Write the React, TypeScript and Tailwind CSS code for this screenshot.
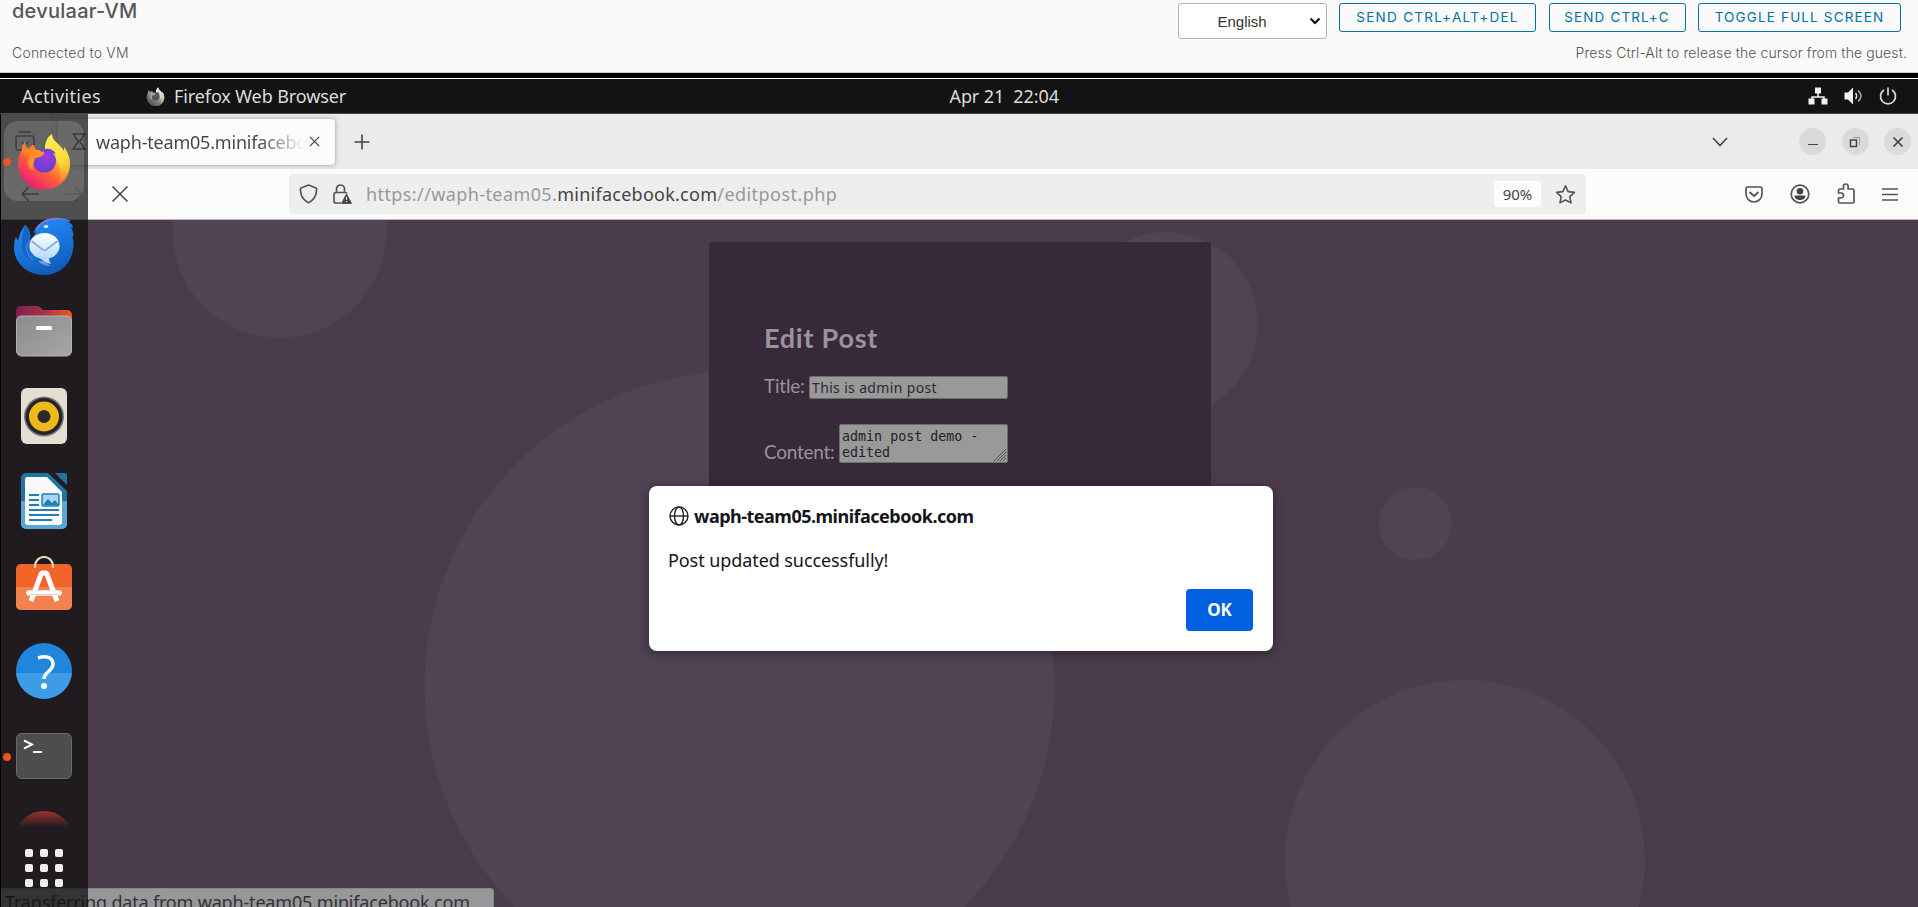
import React from 'react';

function FirefoxLogo({ className, id }: { className: string; id: string }) {
  return (
    <svg viewBox="0 0 54 56" className={className}>
      <defs>
        <linearGradient id={id + 'a'} x1="0.85" y1="0.1" x2="0.25" y2="0.95">
          <stop offset="0" stopColor="#fff04a" />
          <stop offset="0.35" stopColor="#ffb52e" />
          <stop offset="0.65" stopColor="#ff5a3c" />
          <stop offset="1" stopColor="#ee1c78" />
        </linearGradient>
        <linearGradient id={id + 'b'} x1="0" y1="0" x2="1" y2="1">
          <stop offset="0" stopColor="#ff7a1e" />
          <stop offset="1" stopColor="#ffa02e" />
        </linearGradient>
        <radialGradient id={id + 'c'} cx="0.6" cy="0.3" r="0.8">
          <stop offset="0" stopColor="#a13bd8" />
          <stop offset="1" stopColor="#5b3fd0" />
        </radialGradient>
        <linearGradient id={id + 'd'} x1="0.3" y1="0" x2="0.6" y2="1">
          <stop offset="0" stopColor="#fff14f" />
          <stop offset="0.6" stopColor="#ffd83a" />
          <stop offset="1" stopColor="#ffa330" stopOpacity="0" />
        </linearGradient>
      </defs>
      <path
        d="M8 9c0 3 1 5 3 7 2-2 3-3 6-4 0 2 1 3 2 5l9 0c0-5 1-11 7-15 0 6 5 8 9 13 1 1 2 2 3 4l0-4c3 4 6 10 6 16 0 15-12 26-26 26S1 45 1 31c0-7 2-11 4-14 0-3 1-6 3-8z"
        fill={'url(#' + id + 'a)'}
      />
      <path
        d="M28 17c0-6 1-12 7-16 0 6 5 8 9 13 1 1 2 2 3 4l0-4c3 4 6 10 6 16 0 10-6 18-13 22 4-6 5-13 2-20-2-7-8-11-14-15z"
        fill={'url(#' + id + 'd)'}
      />
      <circle cx="27.500" cy="28" r="11.500" fill={'url(#' + id + 'c)'} />
      <path d="M28 16c5-1 9 1 11 5-2-1-3-1-4 0l-7-2z" fill="#7d3fe0" />
      <path
        d="M8 9c0 3 1 5 3 7 2-2 3-3 6-4 0 3 2 6 5 6l5 1c1 4-5 5-8 6-2 1-2 3-2 5-2 2-2 5 0 8-6-3-8-9-5-15-3-1-5-3-7-7 0-3 1-5 3-7z"
        fill={'url(#' + id + 'b)'}
      />
    </svg>
  );
}

function Thunderbird() {
  return (
    <svg viewBox="0 0 62 60" className="mt-[2px] h-[60px] w-[62px]">
      <defs>
        <linearGradient id="tb" x1="0.2" y1="0" x2="0.6" y2="1">
          <stop offset="0" stopColor="#2a8af0" />
          <stop offset="0.5" stopColor="#1977e0" />
          <stop offset="1" stopColor="#0f5bb5" />
        </linearGradient>
        <linearGradient id="tbm" x1="0" y1="0" x2="0" y2="1">
          <stop offset="0" stopColor="#ffffff" />
          <stop offset="1" stopColor="#b5dbfb" />
        </linearGradient>
      </defs>
      <path
        d="M12 8c5 4 6 9 5 15l5-6c1-10 11-16 22-16 6 0 11 1 14 3l-3 1c3 1 5 3 5 6l-2-1c2 4 3 8 2 10l-1-1c2 5 2 9 1 13-2 16-14 26-29 26C14 58 1 46 1 30c0-5 1-8 2-10l2 4c1-7 4-12 7-16z"
        fill="url(#tb)"
      />
      <path d="M12 8c5 4 6 9 5 15-3 6-2 14 1 20-8-4-11-10-9-18 0-6 1-12 3-17z" fill="#1566c4" />
      <path d="M16 24c-4 6-3 14 4 19" fill="none" stroke="#6f7be0" strokeWidth="1" />
      <path d="M20 18c2-10 11-17 23-17 5 0 10 1 14 3-9-2-17-2-24 1-5 1-10 7-13 13z" fill="#8a7bdc" />
      <path d="M25 44c4 4 8 5 13 5-3-1-4-3-5-5z" fill="#7b8df0" />
      <ellipse cx="31.500" cy="29" rx="15" ry="13" fill="url(#tbm)" />
      <path d="M24 39c5 4 9 7 14 8-2-3-2-5-2-8z" fill="#b5dbfb" />
      <path d="M18.500 24l11 8.500c1.500 1 2.500 1 4 0l11-8.500" fill="none" stroke="#86aed6" strokeWidth="1.800" />
      <ellipse cx="33" cy="9.500" rx="2.200" ry="1.500" fill="#e8f4ff" />
    </svg>
  );
}

function Files() {
  return (
    <svg viewBox="0 0 56 52" className="h-[52px] w-[56px]">
      <defs>
        <linearGradient id="fo" x1="0" y1="0" x2="1" y2="0">
          <stop offset="0" stopColor="#7b2150" />
          <stop offset="0.5" stopColor="#a8324a" />
          <stop offset="1" stopColor="#ea5a24" />
        </linearGradient>
        <linearGradient id="fg" x1="0" y1="0" x2="1" y2="1">
          <stop offset="0" stopColor="#8c8c8c" />
          <stop offset="1" stopColor="#a6a6a6" />
        </linearGradient>
      </defs>
      <path d="M0 22V6a5 5 0 0 1 5-5h16c2 0 3 1 4 2l2 2h24a5 5 0 0 1 5 5v14z" fill="url(#fo)" />
      <rect x="0.500" y="11" width="55" height="40" rx="5" fill="url(#fg)" stroke="#b3b3b3" />
      <rect x="20" y="21" width="16" height="4" rx="1.500" fill="#fff" />
    </svg>
  );
}

function Rhythmbox() {
  return (
    <svg viewBox="0 0 46 56" className="h-[56px] w-[46px]">
      <rect width="46" height="56" rx="6" fill="#e4dfd2" />
      <circle cx="23" cy="28.500" r="20" fill="#77767a" />
      <circle cx="23" cy="28.500" r="18.500" fill="#24232b" />
      <circle cx="23" cy="28.500" r="15" fill="#f0b91a" />
      <circle cx="23" cy="28.500" r="6.500" fill="#2b2b2b" />
    </svg>
  );
}

function Writer() {
  return (
    <svg viewBox="0 0 46 56" className="h-[56px] w-[46px]">
      <path d="M5 0h22l19 18v33a5 5 0 0 1-5 5H5a5 5 0 0 1-5-5V5a5 5 0 0 1 5-5z" fill="#1d75a4" />
      <path d="M0 28h46v23a5 5 0 0 1-5 5H5a5 5 0 0 1-5-5z" fill="#57a9d2" />
      <path d="M6 4h20l15 15v30a3 3 0 0 1-3 3H7a3 3 0 0 1-3-3V6a2 2 0 0 1 2-2z" fill="#fafafa" />
      <path d="M34 0h10a2 2 0 0 1 2 2v10z" fill="#1d75a4" />
      <path d="M8 22h10M8 27h10M8 32h10M8 37h30M8 42h30M8 47h23" stroke="#1d7fb3" strokeWidth="2.200" />
      <rect x="21" y="21" width="17" height="12" rx="1.500" fill="#a9d6ee" stroke="#1d7fb3" strokeWidth="1.500" />
      <path d="M22 32l5-6 4 4 3-3 4 5z" fill="#1d7fb3" />
    </svg>
  );
}

function Software() {
  return (
    <svg viewBox="0 0 56 54" className="-mt-[6px] h-[54px] w-[56px]">
      <rect y="8" width="56" height="46" rx="5" fill="#f2632a" />
      <path d="M0 31h56v18a5 5 0 0 1-5 5H5a5 5 0 0 1-5-5z" fill="#f3804f" />
      <path d="M19 12v-2a9 9 0 0 1 18 0v2" fill="none" stroke="#ead9b0" strokeWidth="2.200" />
      <path d="M15 45l10.500-28h5L41 45" fill="none" stroke="#fff" strokeWidth="5" strokeLinejoin="bevel" />
      <path d="M13 37h30" stroke="#fff" strokeWidth="5.500" strokeLinecap="round" />
      <path d="M13 38.500h30" stroke="#f4c3b0" strokeWidth="0.800" />
    </svg>
  );
}

function Help() {
  return (
    <svg viewBox="0 0 56 56" className="h-[56px] w-[56px]">
      <circle cx="28" cy="28" r="28" fill="#2086dd" />
      <path d="M0.100 30h55.800a28 28 0 0 1-55.800 0z" fill="#3d9ce6" />
      <path d="M22 15c9-3 15 0 15 6 0 7-9 8-9 15" fill="none" stroke="#fff" strokeWidth="3.600" />
      <circle cx="28" cy="43" r="3" fill="#fff" />
    </svg>
  );
}

function Terminal() {
  return (
    <svg viewBox="0 0 56 46" className="h-[46px] w-[56px]">
      <rect x="0.500" y="0.500" width="55" height="45" rx="5" fill="#4d4d4d" stroke="#6a6a6a" />
      <path d="M8 7.500l8 4-8 4" fill="none" stroke="#fff" strokeWidth="2" />
      <path d="M17 19h9" stroke="#fff" strokeWidth="2" />
    </svg>
  );
}

function DockRow({ children, running }: { children: React.ReactNode; running?: boolean }) {
  return (
    <div className="relative flex h-[85px] w-full shrink-0 items-center justify-center pr-[2px]">
      {running && <span className="absolute left-[2px] top-[39px] h-2 w-2 rounded-full bg-[#e95420]" />}
      {children}
    </div>
  );
}

function Dock() {
  const dots = [0, 1, 2, 3, 4, 5, 6, 7, 8];
  return (
    <div className="absolute bottom-0 left-0 top-[35px] flex w-[88px] flex-col items-center border-l border-black bg-[#0f0f0f]/73 pt-[4.500px]">
      <DockRow running>
        <div className="flex h-[80px] w-[80px] shrink-0 items-center justify-center rounded-[14px] bg-white/15">
          <FirefoxLogo id="fx" className="h-[56px] w-[54px]" />
        </div>
      </DockRow>
      <DockRow><Thunderbird /></DockRow>
      <DockRow><Files /></DockRow>
      <DockRow><Rhythmbox /></DockRow>
      <DockRow><Writer /></DockRow>
      <DockRow><Software /></DockRow>
      <DockRow><Help /></DockRow>
      <DockRow running><Terminal /></DockRow>
      <div className="flex h-[27px] w-full shrink-0 items-end justify-center pr-[2px]">
        <svg viewBox="0 0 52 16" className="h-[16px] w-[52px]">
          <defs>
            <linearGradient id="red" x1="0" y1="0" x2="0" y2="1">
              <stop offset="0" stopColor="#9c3230" />
              <stop offset="1" stopColor="#9c3230" stopOpacity="0.100" />
            </linearGradient>
          </defs>
          <path d="M0 16Q10 1 26 1T52 16z" fill="url(#red)" />
        </svg>
      </div>
      <div className="mr-[2px] mt-[23px] grid grid-cols-3 gap-[7px]">
        {dots.map((d) => (
          <span key={d} className="h-2 w-2 rounded-[2px] bg-[#f0eff0]" />
        ))}
      </div>
    </div>
  );
}

function ConsoleHeader() {
  const btn =
    'flex h-[29px] items-center justify-center rounded-[3px] border border-[#0072a3] font-["Inter"] text-[13.5px] leading-none text-[#0072a3]';
  return (
    <header className="flex h-[73px] shrink-0 justify-between border-b border-[#cfcfcf] bg-[#fafafa] pl-[12px] text-[#565656]">
      <div className="flex flex-col font-['Inter',sans-serif]">
        <div className="h-[24px] text-[20px] font-medium leading-[23px] tracking-[0.25px]">devulaar-VM</div>
        <div className="mt-[18px] text-[14px] font-light leading-[22px] tracking-[0.2px]">Connected to VM</div>
      </div>
      <div className="flex flex-col items-end">
        <div className="mr-[17px] flex h-[42px] items-start gap-[12.500px] pt-[3px]">
          <div className="flex h-[36px] w-[149px] items-center justify-between rounded-[3px] border border-[#b3b3b3] bg-white pl-[39px] pr-[5px]">
            <span className="font-['Liberation_Sans',sans-serif] text-[15px] leading-none text-[#333]">English</span>
            <svg viewBox="0 0 12 8" className="h-[8px] w-[12px]">
              <path d="M1.500 1.500L6 6l4.500-4.500" fill="none" stroke="#111" strokeWidth="2.200" />
            </svg>
          </div>
          <div className={btn + ' w-[197px] tracking-[1.3px]'}>SEND CTRL+ALT+DEL</div>
          <div className={btn + ' w-[137px] tracking-[1.15px]'}>SEND CTRL+C</div>
          <div className={btn + ' w-[203px] tracking-[1.15px]'}>TOGGLE FULL SCREEN</div>
        </div>
        <div className="mr-[11px] font-['Inter',sans-serif] text-[14px] font-light leading-[22px] tracking-[0.1px]">
          Press Ctrl-Alt to release the cursor from the guest.
        </div>
      </div>
    </header>
  );
}

function TopBar() {
  return (
    <div className="grid h-[35px] shrink-0 grid-cols-[1fr_auto_1fr] items-center border-b border-[#4a4a4a] bg-[#131313] text-[18px] leading-none tracking-[-0.1px] text-[#dcdcdc]">
      <div className="flex items-center pl-[22px]">
        <span className="w-[124px] tracking-[0.4px]">Activities</span>
        <FirefoxLogo id="fm" className="h-[19px] w-[19px] grayscale" />
        <span className="ml-[9px]">Firefox Web Browser</span>
      </div>
      <span className="ml-[91px] w-[110px] whitespace-pre">Apr 21  22:04</span>
      <div className="flex items-center justify-end gap-[16px] pr-[21px]">
        <svg viewBox="0 0 20 18" className="h-[18px] w-[20px]">
          <path d="M10 4v6M4 14v-4h12v4" fill="none" stroke="#f2f2f2" strokeWidth="1.500" />
          <path d="M7 0.500h6v6H7zM0.500 11.500h6v6h-6zM13.500 11.500h6v6h-6z" fill="#f2f2f2" />
        </svg>
        <svg viewBox="0 0 19 18" className="h-[18px] w-[19px]" fill="none" stroke="#e5e5e5" strokeWidth="1.500">
          <path d="M0.500 5.500h3.500l5-5v17l-5-5H0.500z" fill="#f2f2f2" stroke="none" />
          <path d="M11.500 6c1.500 2 1.500 4 0 6" />
          <path d="M14 3.500c4 3.500 4 7.500 0 11" stroke="#aaa" />
        </svg>
        <svg viewBox="0 0 18 18" className="h-[18px] w-[18px]" fill="none" stroke="#d8d8d8" strokeWidth="1.700">
          <path d="M9 0.500v8M5 3a7.500 7.500 0 1 0 8 0" />
        </svg>
      </div>
    </div>
  );
}

function TabStrip() {
  const round = 'flex h-[27px] w-[27px] items-center justify-center rounded-full bg-[#dadada]';
  return (
    <div className="flex h-[55px] shrink-0 items-center bg-[#ebebeb]">
      <div className="flex h-full w-[53px] items-center justify-center border-r border-[#d0d0d0] pr-[3px]">
        <svg viewBox="0 0 20 20" className="-mt-[1px] h-[20px] w-[20px]" fill="none" stroke="#484848" strokeWidth="1.500">
          <path d="M4 1h12M3 5h14a2 2 0 0 1 2 2v10a2 2 0 0 1-2 2H3a2 2 0 0 1-2-2V7a2 2 0 0 1 2-2zM6.500 10.500L10 14l3.500-3.500" />
        </svg>
      </div>
      <div className="ml-[5px] flex h-[46px] w-[277px] items-center rounded-[4px] bg-[#fcfcfc] shadow-[0_0_5px_rgba(0,0,0,0.35)]">
        <svg viewBox="0 0 14 18" className="ml-[14px] h-[17px] w-[14px]" fill="none" stroke="#333" strokeWidth="1.500">
          <path d="M0 1h14M0 17h14M2 1c0 5 3 6 5 8 2-2 5-3 5-8M2 17c0-5 3-6 5-8 2 2 5 3 5 8" />
        </svg>
        <div className="ml-[10px] w-[209px] overflow-hidden whitespace-nowrap bg-linear-to-r from-[#444] from-78% to-transparent bg-clip-text text-[18px] leading-[26px] tracking-[-0.2px] text-transparent">
          waph-team05.minifacebook.com
        </div>
        <svg viewBox="0 0 12 12" className="ml-[4px] h-[11px] w-[11px]">
          <path d="M1 1l10 10M11 1L1 11" stroke="#444" strokeWidth="1.400" />
        </svg>
      </div>
      <svg viewBox="0 0 16 16" className="ml-[19px] h-[16px] w-[16px]">
        <path d="M8 0.500v15M0.500 8h15" stroke="#444" strokeWidth="1.600" />
      </svg>
      <svg viewBox="0 0 16 10" className="ml-auto h-[10px] w-[16px]">
        <path d="M1 1l7 7.500L15 1" fill="none" stroke="#444" strokeWidth="1.600" />
      </svg>
      <div className="ml-[71px] mr-[7px] flex gap-[15.500px]">
        <span className={round}>
          <span className="mt-1.5 h-[1.500px] w-[10px] bg-[#444]" />
        </span>
        <span className={round}>
          <svg viewBox="0 0 12 12" className="h-[12px] w-[12px]" fill="none">
            <path d="M1.500 4h6v6.500h-6z" stroke="#444" strokeWidth="1.500" />
            <path d="M4 1.500h6.500V9" stroke="#999" />
          </svg>
        </span>
        <span className={round}>
          <svg viewBox="0 0 12 12" className="h-[12px] w-[12px]">
            <path d="M1.500 1.500l9 9M10.500 1.500l-9 9" stroke="#444" strokeWidth="1.700" />
          </svg>
        </span>
      </div>
    </div>
  );
}

function NavBar() {
  return (
    <div className="flex h-[51px] shrink-0 items-center border-b border-[#b5b5b5] bg-[#fbfbfb]">
      <svg viewBox="0 0 18 16" className="ml-[21px] h-[16px] w-[18px]" fill="none" stroke="#333" strokeWidth="1.500">
        <path d="M18 8H1M8 1L1 8l7 7" />
      </svg>
      <svg viewBox="0 0 18 16" className="ml-[26px] h-[16px] w-[18px]" fill="none" stroke="#b5b5b5" strokeWidth="1.500">
        <path d="M0 8h17M10 1l7 7-7 7" />
      </svg>
      <svg viewBox="0 0 16 16" className="ml-[29px] h-[16px] w-[16px]">
        <path d="M0.500 0.500l15 15M15.500 0.500l-15 15" stroke="#444" strokeWidth="1.500" />
      </svg>
      <div className="ml-[161px] flex h-[40px] w-[1297px] items-center rounded-[4px] bg-[#eeeeee] pl-[10px]">
        <svg viewBox="0 0 19 20" className="h-[20px] w-[19px]" fill="none" stroke="#555" strokeWidth="1.700">
          <path d="M9.500 1L17.500 4.200c0.500 6.500-2 11.500-8 14.500-6-3-8.500-8-8-14.500z" strokeLinejoin="round" />
        </svg>
        <svg viewBox="0 0 19 20" className="ml-[15px] h-[20px] w-[19px]" fill="none" stroke="#555" strokeWidth="1.700">
          <path d="M3.500 8V5a4 4 0 0 1 8 0v3M8 19H3a2 2 0 0 1-2-2v-6.500a2 2 0 0 1 2-2h9.500a2 2 0 0 1 1.500 1" />
          <path d="M13.500 10l5 9.500h-10z" fill="#444" stroke="#444" strokeWidth="0.800" strokeLinejoin="round" />
          <path d="M13.500 13v3M13.500 17v1" stroke="#eee" strokeWidth="1.200" />
        </svg>
        <div className="ml-[14px] flex text-[18px] leading-[26px] tracking-[0.4px] text-[#999]">
          <span>https://waph-team05.</span>
          <span className="tracking-[0.25px] text-[#444]">minifacebook.com</span>
          <span className="tracking-[0.45px]">/editpost.php</span>
        </div>
        <span className="ml-auto flex h-[26px] w-[47px] items-center justify-center rounded-[3px] bg-[#fcfcfc] text-[15px] tracking-[-0.1px] text-[#444]">
          90%
        </span>
        <svg viewBox="0 0 22 21" className="ml-[14px] mr-[10px] h-[21px] w-[21px]" fill="none" stroke="#555" strokeWidth="1.700">
          <path d="M11 1.500l2.800 6 6.500 0.800-4.800 4.500 1.300 6.500L11 16.200l-5.800 3.100 1.300-6.500L1.700 8.300l6.500-0.800z" strokeLinejoin="round" />
        </svg>
      </div>
      <div className="ml-auto mr-[20px] flex items-center gap-[27px]">
        <svg viewBox="0 0 18 17" className="h-[17px] w-[18px]" fill="none" stroke="#555" strokeWidth="1.700">
          <path d="M2.500 1h13a1.500 1.500 0 0 1 1.500 1.500V8a8 8 0 0 1-16 0V2.500A1.500 1.500 0 0 1 2.500 1zM4.500 6L9 10l4.500-4" />
        </svg>
        <svg viewBox="0 0 20 20" className="h-[20px] w-[20px]" fill="none">
          <circle cx="10" cy="10" r="8.800" stroke="#555" strokeWidth="1.700" />
          <circle cx="10" cy="7.300" r="3.300" fill="#444" />
          <path d="M4.500 11.500h11c0 3-2.500 4.500-5.500 4.500s-5.500-1.500-5.500-4.500z" fill="#444" />
        </svg>
        <svg viewBox="0 0 18 21" className="-mt-[2px] h-[21px] w-[18px]" fill="none" stroke="#555" strokeWidth="1.700">
          <path d="M1.500 10V7.500a1.500 1.500 0 0 1 1.500-1.500h3.500V3.300a2.300 2.300 0 0 1 4.600 0V6H15.500a1.500 1.500 0 0 1 1.500 1.500v11a1.500 1.500 0 0 1-1.500 1.500H3a1.500 1.500 0 0 1-1.500-1.500V15H4a2.500 2.500 0 0 0 0-5z" />
        </svg>
        <svg viewBox="0 0 16 13" className="h-[13px] w-[16px]">
          <path d="M0 1h16M0 6.500h16M0 12h16" stroke="#555" strokeWidth="1.600" />
        </svg>
      </div>
    </div>
  );
}

function Dialog() {
  return (
    <div className="absolute left-[649px] top-[266px] flex h-[165px] w-[624px] flex-col rounded-[8px] bg-white px-[19px] text-[#15141a] shadow-[0_2px_12px_rgba(0,0,0,0.4)]">
      <div className="mt-[17px] flex h-[26px] items-center">
        <svg viewBox="0 0 20 20" className="ml-[1px] h-[20px] w-[20px]" fill="none" stroke="#222" strokeWidth="1.400">
          <circle cx="10" cy="10" r="9" />
          <ellipse cx="10" cy="10" rx="4.500" ry="9" />
          <path d="M1 10h18" />
        </svg>
        <span className="ml-[5px] text-[18px] font-bold leading-[26px] tracking-[-0.5px]">waph-team05.minifacebook.com</span>
      </div>
      <div className="mt-[18px] text-[18px] leading-[26px] tracking-[-0.08px]">Post updated successfully!</div>
      <div className="mr-[1px] mt-[16px] flex h-[42px] w-[67px] items-center justify-center self-end rounded-[4px] bg-[#0060df] text-[17px] font-bold text-white">
        OK
      </div>
    </div>
  );
}

function Page() {
  return (
    <main className="relative flex-1 overflow-hidden bg-[#4b3c4c]">
      <svg viewBox="0 0 1918 687" className="absolute left-0 top-0 h-[687px] w-[1918px]" fill="#504353">
        <circle cx="279.500" cy="11" r="107" />
        <circle cx="739.500" cy="466" r="315" />
        <circle cx="1166" cy="104" r="92" />
        <circle cx="1415.500" cy="303.500" r="36.500" />
        <circle cx="1465" cy="640" r="180" />
      </svg>
      <div className="relative ml-[709px] mt-[22px] flex h-[320px] w-[502px] flex-col rounded-[3px] bg-[#37283a] pl-[55px] pt-[77px] font-['Lato',sans-serif] text-[19px] text-[#99939a]">
        <h1 className="h-[38px] text-[27px] font-bold leading-[38px] tracking-[0.75px]">Edit Post</h1>
        <div className="mt-[18px] flex h-[24px] items-center">
          <span className="w-[45px] pb-px tracking-[-0.2px]">Title:</span>
          <span className="flex h-[23px] w-[199px] items-center rounded-[2px] border border-[#6e6a70] bg-[#99999a] pl-[2px] font-['Noto_Sans',sans-serif] text-[14px] tracking-[0.35px] text-[#2c2a30]">
            This is admin post
          </span>
        </div>
        <div className="mt-[24px] flex h-[40px] items-end">
          <span className="-mb-[3px] w-[75px] tracking-[-0.25px]">Content:</span>
          <span className="relative h-[39px] w-[169px] whitespace-pre rounded-[2px] border border-[#6e6a70] bg-[#99999a] pl-[2px] pt-[4px] font-['DejaVu_Sans_Mono',monospace] text-[13.330px] leading-[16px] text-[#222025]">
            {'admin post demo -\nedited'}
            <svg viewBox="0 0 12 12" className="absolute bottom-px right-px h-[12px] w-[12px]">
              <path d="M0 12L12 0M3 12l9-9M6 12l6-6M9 12l3-3" stroke="#555" strokeWidth="1" />
            </svg>
          </span>
        </div>
      </div>
      <Dialog />
      <div className="absolute bottom-0 left-0 h-[19px] w-[494px] overflow-hidden rounded-tr-[4px] border-r border-t border-[#88868a] bg-[#979698] pl-[5px] text-[18px] leading-[26px] text-[#343236]">
        <span className="whitespace-nowrap tracking-[-0.18px]">Transferring data from waph-team05.minifacebook.com</span>
      </div>
    </main>
  );
}

export default function App() {
  return (
    <div className="flex h-[907px] w-full flex-col overflow-hidden bg-black">
      <ConsoleHeader />
      <div className="mt-[5px] flex min-h-0 flex-1 flex-col border-t border-white font-['Noto_Sans','Open_Sans',sans-serif]">
        <div className="relative flex min-h-0 flex-1 flex-col">
          <TopBar />
          <TabStrip />
          <NavBar />
          <Page />
          <Dock />
        </div>
      </div>
    </div>
  );
}
